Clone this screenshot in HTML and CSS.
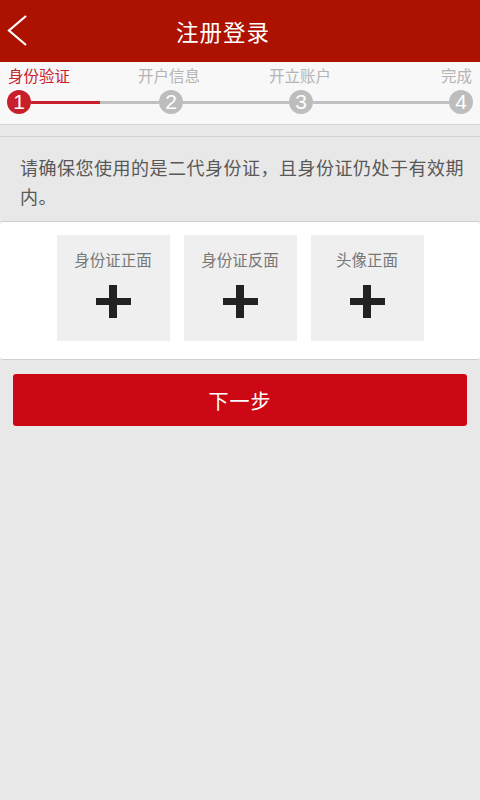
FILE: index.html
```html
<!DOCTYPE html>
<html lang="zh-CN">
<head>
<meta charset="utf-8">
<title>注册登录</title>
<link rel="stylesheet" href="styles.css">
</head>
<body>
<div class="app">
  <header class="topbar">
    <svg class="back" width="24" height="34" viewBox="0 0 24 34">
      <polyline points="20,2 3,16.5 20,31" fill="none" stroke="#fff" stroke-width="2.2"/>
    </svg>
    <h1 class="title">注册登录</h1>
  </header>

  <section class="steps">
    <div class="labels">
      <span class="lbl l1 on">身份验证</span>
      <span class="lbl l2">开户信息</span>
      <span class="lbl l3">开立账户</span>
      <span class="lbl l4">完成</span>
    </div>
    <div class="track">
      <span class="dot on">1</span>
      <span class="seg s1"><i class="fill"></i></span>
      <span class="dot">2</span>
      <span class="seg s2"></span>
      <span class="dot">3</span>
      <span class="seg s3"></span>
      <span class="dot">4</span>
    </div>
  </section>

  <div class="spacer"></div>

  <p class="notice">请确保您使用的是二代身份证，且身份证仍处于有效期内。</p>

  <section class="card">
    <div class="tile"><span class="tile-lbl">身份证正面</span><span class="plus"></span></div>
    <div class="tile"><span class="tile-lbl">身份证反面</span><span class="plus"></span></div>
    <div class="tile"><span class="tile-lbl">头像正面</span><span class="plus"></span></div>
  </section>

  <div class="actions">
    <button class="next">下一步</button>
  </div>
</div>
</body>
</html>
```

FILE: styles.css
```css
* { box-sizing: border-box; margin: 0; padding: 0; }
html, body { width: 480px; height: 800px; }
body {
  background: #e8e8e8;
  font-family: "Noto Sans CJK SC", "Noto Sans", sans-serif;
  overflow: hidden;
}
.app { width: 480px; min-height: 800px; background: #e8e8e8; }

.topbar {
  height: 62px;
  background: #ad1100;
  display: flex;
  align-items: center;
  justify-content: center;
  padding-right: 34px;
  position: relative;
}
.back { position: absolute; left: 6px; top: 14px; }
.title {
  color: #fff;
  font-size: 22.5px;
  font-weight: 400;
  letter-spacing: 1px;
  line-height: 30px;
}

.steps {
  background: #f8f8f8;
  border-bottom: 1px solid #d4d4d4;
  padding: 3px 0 10px;
  height: 63px;
}
.labels {
  display: flex;
  height: 20px;
  align-items: center;
}
.lbl {
  font-size: 15.5px;
  line-height: 20px;
  color: #b4b4b4;
  white-space: nowrap;
}
.lbl.on { color: #c8202a; }
.l1 { margin-left: 8px; }
.l2 { margin-left: 68px; }
.l3 { margin-left: 69px; }
.l4 { margin-left: auto; margin-right: 8px; }

.track {
  display: flex;
  align-items: center;
  margin-top: 5px;
  padding-left: 7px;
  height: 24px;
}
.dot {
  width: 24px;
  height: 24px;
  border-radius: 50%;
  background: #bdbdbd;
  color: #fff;
  font-family: "Liberation Sans", Arial, sans-serif;
  font-size: 21px;
  line-height: 24px;
  text-align: center;
  flex: none;
}
.dot.on { background: #c8202a; }
.seg {
  height: 3px;
  background: #c0c0c0;
  flex: none;
  display: flex;
}
.s1 { width: 128px; }
.s2 { width: 106px; }
.s3 { width: 136px; }
.fill { width: 69px; height: 3px; background: #c8202a; }

.spacer {
  height: 12px;
  border-bottom: 1px solid #d2d2d2;
}

.notice {
  padding: 16px 14px 10px 20px;
  font-size: 18px;
  letter-spacing: 0.5px;
  line-height: 29px;
  color: #585858;
}

.card {
  background: #fff;
  border-top: 1px solid #cfcfcf;
  border-bottom: 1px solid #cfcfcf;
  border-radius: 3px;
  display: flex;
  justify-content: center;
  gap: 14px;
  padding: 13px 0 18px;
}
.tile {
  width: 113px;
  height: 106px;
  background: #efefef;
  display: flex;
  flex-direction: column;
  align-items: center;
}
.tile-lbl {
  margin-top: 14px;
  font-size: 15.5px;
  line-height: 20px;
  color: #777;
}
.plus {
  margin-top: 16px;
  width: 35px;
  height: 33px;
  background:
    linear-gradient(#222, #222) center / 35px 7px no-repeat,
    linear-gradient(#222, #222) center / 8px 33px no-repeat;
}

.actions { padding: 14px 13px 0; }
.next {
  width: 454px;
  height: 52px;
  background: #cc0814;
  border: none;
  border-radius: 3px;
  color: #fff;
  font-family: "Noto Sans CJK SC", "Noto Sans", sans-serif;
  font-size: 20px;
  letter-spacing: 1px;
  display: block;
}
```
